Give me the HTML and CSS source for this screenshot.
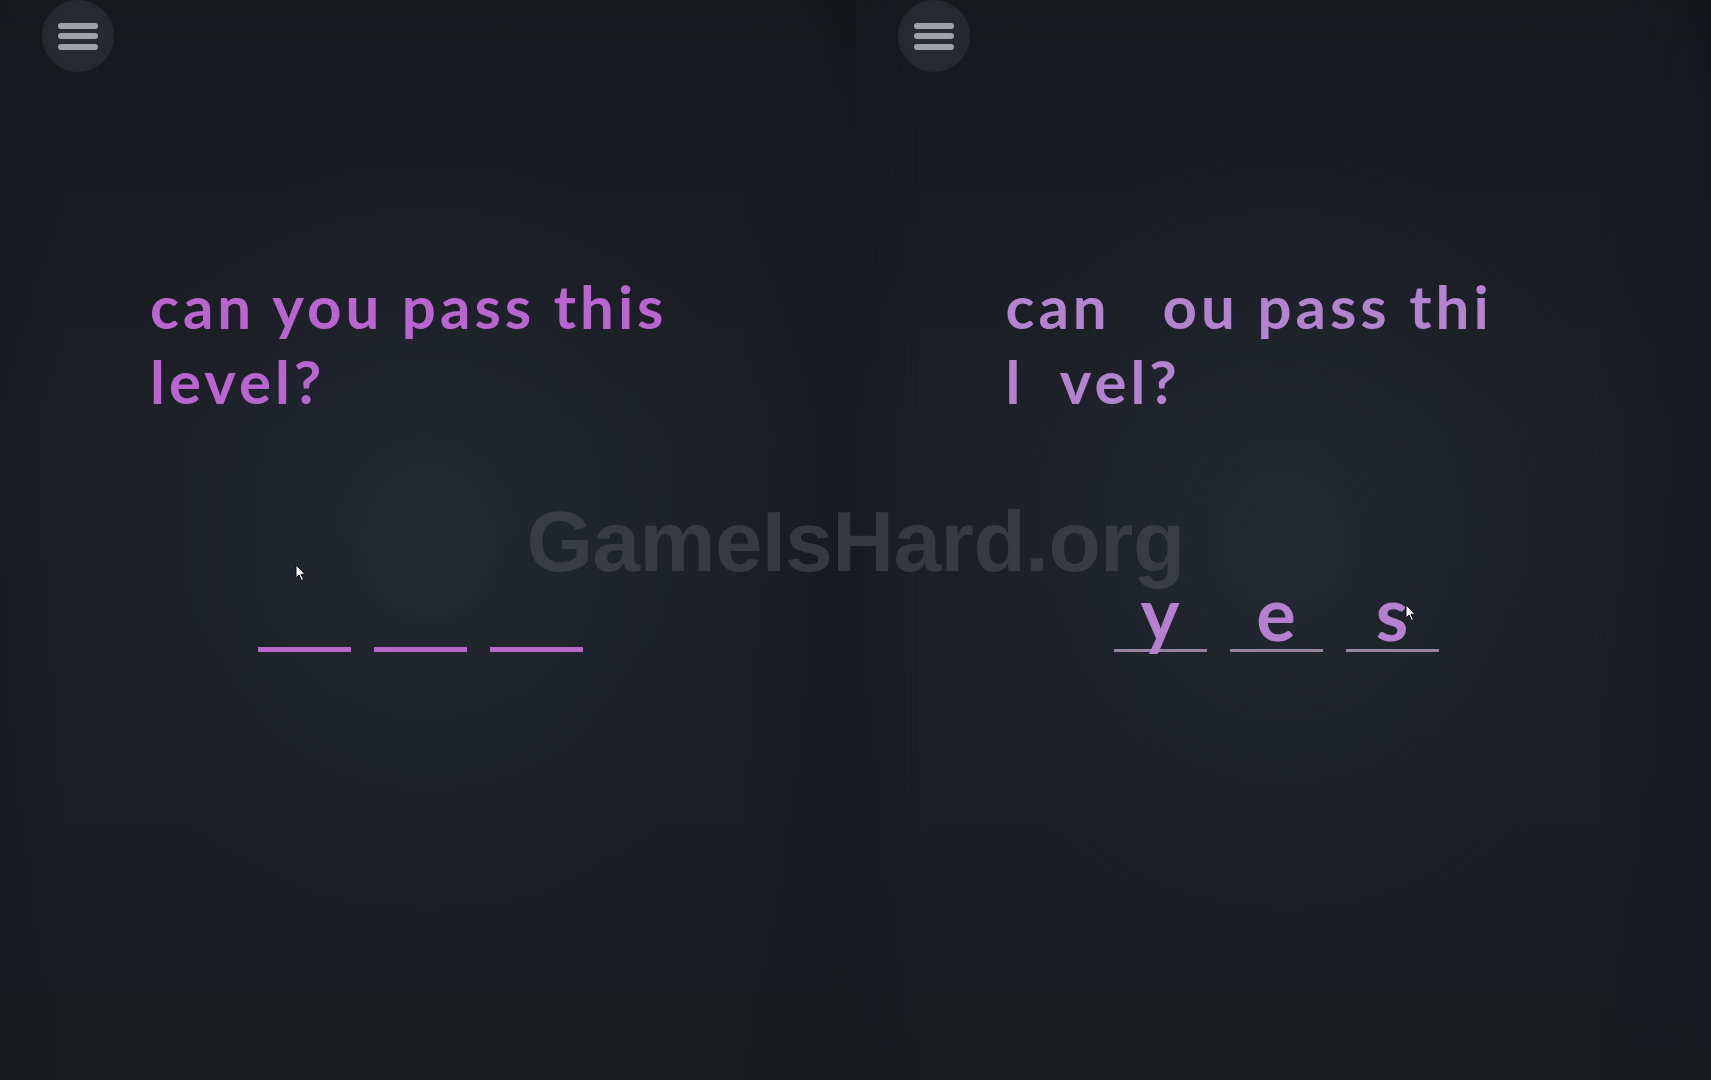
FILE: index.html
```html
<!DOCTYPE html>
<html lang="en">
<head>
<meta charset="utf-8">
<title>can you pass this level?</title>
<link rel="stylesheet" href="styles.css">
</head>
<body>
<main class="split">
  <section class="panel panel-a">
    <button class="menu" aria-label="menu"><span></span><span></span><span></span></button>
    <h1 class="question">can you pass this level?</h1>
    <div class="slots">
      <span class="slot"></span>
      <span class="slot"></span>
      <span class="slot"></span>
    </div>
    <svg class="cursor cursor-a" viewBox="0 0 12 18" width="12" height="18"><path d="M1 1 L1 14 L4 11 L6.5 16.5 L8.5 15.6 L6 10.2 L10 10.2 Z" fill="#fff" stroke="#111" stroke-width="1" stroke-linejoin="round"/></svg>
  </section>
  <section class="panel panel-b">
    <button class="menu" aria-label="menu"><span></span><span></span><span></span></button>
    <h1 class="question">can <span class="gone">y</span>ou pass thi<span class="gone">s</span> l<span class="gone">e</span>vel?</h1>
    <div class="slots">
      <span class="slot"><span class="letter">y</span></span>
      <span class="slot"><span class="letter">e</span></span>
      <span class="slot"><span class="letter">s</span></span>
    </div>
    <svg class="cursor cursor-b" viewBox="0 0 12 18" width="12" height="18"><path d="M1 1 L1 14 L4 11 L6.5 16.5 L8.5 15.6 L6 10.2 L10 10.2 Z" fill="#fff" stroke="#111" stroke-width="1" stroke-linejoin="round"/></svg>
  </section>
</main>
<div class="watermark">GameIsHard.org</div>
</body>
</html>
```
FILE: styles.css
```css
* { box-sizing: border-box; }

html, body {
  margin: 0;
  padding: 0;
  width: 1711px;
  height: 1080px;
  overflow: hidden;
  background: #1b1d21;
}

body {
  position: relative;
  font-family: Lato, "Noto Sans", sans-serif;
}

.split {
  display: grid;
  grid-template-columns: 1fr 1fr;
  height: 1080px;
}

.panel {
  position: relative;
  display: flex;
  flex-direction: column;
  align-items: flex-start;
  padding: 0;
  background:
    linear-gradient(to right, rgba(12,14,18,0.18) 0%, rgba(12,14,18,0) 8%, rgba(12,14,18,0) 86%, rgba(12,14,18,0.28) 100%),
    radial-gradient(ellipse 40% 36% at 50% 50%, rgba(38,44,56,0.7) 0%, rgba(38,44,56,0) 100%),
    linear-gradient(to bottom, #18191d 0%, #1c1f26 40%, #1b1e24 70%, #1a1c1f 100%);
}

.menu {
  width: 72px;
  height: 72px;
  margin: 0 0 0 42px;
  padding: 0;
  border: none;
  border-radius: 50%;
  background: radial-gradient(circle at 50% 50%, #292c33 0%, #25282f 70%, #212329 100%);
  display: flex;
  flex-direction: column;
  align-items: center;
  justify-content: center;
  gap: 4.5px;
}

.menu span {
  display: block;
  width: 40px;
  height: 6px;
  border-radius: 3px;
  background: #9ea2ab;
}

.question {
  margin: 197px 0 0 150px;
  max-width: 580px;
  font-size: 60px;
  font-weight: 700;
  line-height: 75px;
  letter-spacing: 4px;
  color: #b865cf;
}

.panel-b .question {
  color: #b383cf;
}

.gone {
  visibility: hidden;
}

.slots {
  display: flex;
  gap: 23px;
  margin: 173px 0 0 258px;
}

.slot {
  width: 93px;
  height: 60px;
  display: flex;
  align-items: flex-end;
  justify-content: center;
  border-bottom: 5px solid #b868cb;
}

.panel-b .slot {
  border-bottom: 3px solid #9684a3;
}

.letter {
  font-size: 74px;
  font-weight: 700;
  line-height: 60px;
  color: #b680d0;
  margin-bottom: 6px;
}

.cursor {
  position: absolute;
}

.cursor-a {
  left: 295px;
  top: 564px;
}

.cursor-b {
  left: 549px;
  top: 604px;
}

.watermark {
  position: absolute;
  left: 0;
  right: 0;
  top: 510px;
  text-align: center;
  font-family: "Liberation Sans", Arial, sans-serif;
  font-weight: 700;
  font-size: 85.5px;
  line-height: 64px;
  letter-spacing: -0.5px;
  color: rgba(74, 76, 82, 0.6);
  pointer-events: none;
}
```
